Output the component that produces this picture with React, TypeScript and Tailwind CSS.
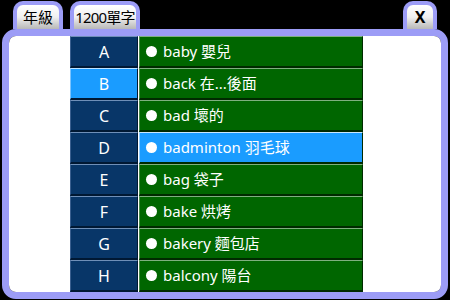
import React from "react";

const rows = [
  { l: "A", t: "baby 嬰兒" },
  { l: "B", t: "back 在...後面" },
  { l: "C", t: "bad 壞的" },
  { l: "D", t: "badminton 羽毛球" },
  { l: "E", t: "bag 袋子" },
  { l: "F", t: "bake 烘烤" },
  { l: "G", t: "bakery 麵包店" },
  { l: "H", t: "balcony 陽台" },
];

function Tab({ children, className }: { children: React.ReactNode; className: string }) {
  return (
    <div
      className={
        "h-[28px] rounded-t-[10px] border-[4px] border-b-0 border-[#9c9cf6] bg-gradient-to-b from-white via-[#f0f0f0] to-[#b8b8b8] flex items-center justify-center text-[15px] text-black leading-none " +
        className
      }
    >
      {children}
    </div>
  );
}

export default function App() {
  return (
    <div
      className="w-[450px] h-[300px] bg-black overflow-hidden"
      style={{ fontFamily: '"Noto Sans", "Noto Sans CJK TC", sans-serif' }}
    >
      <div className="flex h-[29px] pt-[2px] pl-[13px] pr-[13px] items-end">
        <Tab className="w-[50px]">年級</Tab>
        <Tab className="w-[70px] ml-[7px] tracking-[-0.8px]">1200單字</Tab>
        <div className="flex-1" />
        <Tab className="w-[34px] font-bold text-[16px]">X</Tab>
      </div>
      <div className="mx-[2px] h-[270px] border-[7px] border-[#9c9cf6] rounded-[14px] bg-white overflow-hidden">
        <div className="flex flex-col pl-[61px] bg-white">
          {rows.map((r) => {
            const letterSel = r.l === "B";
            const contentSel = r.l === "D";
            return (
              <div key={r.l} className="flex h-[32px]">
                <div
                  className={
                    "w-[68px] h-full flex items-center justify-center text-white text-[16px] border-t border-l border-t-[#6f8fb8] border-l-[#3a5f8f] border-b-[2px] border-r border-b-[#001833] border-r-[#001833] " +
                    (letterSel ? "bg-[#1a9cff] border-t-[#bfe3ff] border-l-[#7cc4ff]" : "bg-[#083668]")
                  }
                >
                  {r.l}
                </div>
                <div
                  className={
                    "ml-[1px] w-[224px] h-full flex items-center pl-[6px] gap-[6px] text-white text-[15px] border-t border-l border-b-[2px] border-r border-b-[#002a00] border-r-[#002a00] " +
                    (contentSel
                      ? "bg-[#1a9cff] border-t-[#c8e6ff] border-l-[#8ccaff]"
                      : "bg-[#006600] border-t-[#7fb07f] border-l-[#4c8c4c]")
                  }
                >
                  <span className="w-[11px] h-[11px] rounded-full bg-white shrink-0" />
                  <span className="leading-none whitespace-nowrap">{r.t}</span>
                </div>
              </div>
            );
          })}
        </div>
      </div>
    </div>
  );
}
